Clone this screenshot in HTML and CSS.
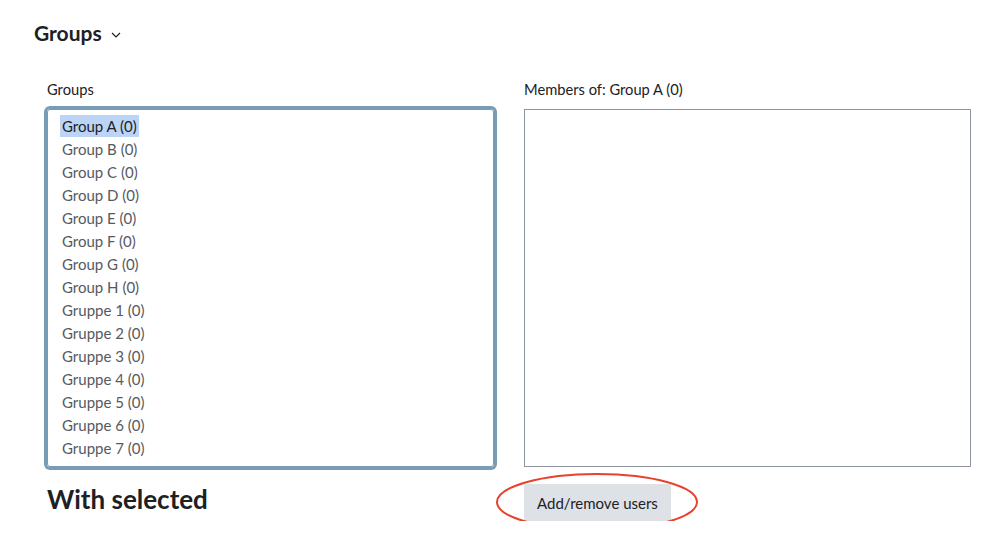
FILE: index.html
```html
<!DOCTYPE html>
<html lang="en">
<head>
    <meta charset="UTF-8">
    <meta name="viewport" content="width=device-width, initial-scale=1.0">
    <title>Groups</title>
    <link rel="stylesheet" href="styles.css">
</head>
<body>
    <div class="page">
        <h2 class="section-title">
            Groups
            <svg class="chevron" width="10" height="6" viewBox="0 0 10 6">
                <path d="M1 1 L5 5 L9 1" fill="none" stroke="#1d2125" stroke-width="1.2"/>
            </svg>
        </h2>

        <div class="columns">
            <div class="column">
                <label class="field-label">Groups</label>
                <div class="select-box focused">
                    <div class="option selected">Group A (0)</div>
                    <div class="option">Group B (0)</div>
                    <div class="option">Group C (0)</div>
                    <div class="option">Group D (0)</div>
                    <div class="option">Group E (0)</div>
                    <div class="option">Group F (0)</div>
                    <div class="option">Group G (0)</div>
                    <div class="option">Group H (0)</div>
                    <div class="option">Gruppe 1 (0)</div>
                    <div class="option">Gruppe 2 (0)</div>
                    <div class="option">Gruppe 3 (0)</div>
                    <div class="option">Gruppe 4 (0)</div>
                    <div class="option">Gruppe 5 (0)</div>
                    <div class="option">Gruppe 6 (0)</div>
                    <div class="option">Gruppe 7 (0)</div>
                </div>
                <h3 class="with-selected">With selected</h3>
            </div>

            <div class="column">
                <label class="field-label">Members of: Group A (0)</label>
                <div class="select-box"></div>
                <div class="actions">
                    <button class="button">Add/remove users</button>
                    <!-- red marker drawn round the button -->
                    <svg class="marker" width="206" height="62" viewBox="0 0 206 62">
                        <ellipse cx="103" cy="31" rx="100" ry="28" fill="none" stroke="#e8412c" stroke-width="2"/>
                    </svg>
                </div>
            </div>
        </div>
    </div>
</body>
</html>
```

FILE: styles.css
```css
body, html {
    margin: 0;
    padding: 0;
    background-color: #ffffff;
    color: #1d2125;
    font-family: Lato, "Open Sans", sans-serif;
}

.page {
    padding: 20px 0 0 34px;
}

.section-title {
    margin: 0;
    font-size: 21px;
    font-weight: bold;
    line-height: 26px;
    display: flex;
    align-items: center;
    gap: 9px;
}

.chevron {
    margin-top: 3px;
}

.columns {
    display: flex;
    gap: 30px;
    margin-top: 33px;
    padding-left: 13px;
}

.column {
    width: 447px;
    display: flex;
    flex-direction: column;
}

.field-label {
    font-size: 14.7px;
    line-height: 20px;
    margin-bottom: 10px;
}

.select-box {
    height: 358px;
    box-sizing: border-box;
    border: 1px solid #8f959e;
    padding: 5px 12px;
    font-size: 15px;
    color: #555a60;
}

.select-box.focused {
    border-color: #789cb6;
    box-shadow: 0 0 0 3px #789cb6;
    border-radius: 3px;
}

.option {
    line-height: 22px;
    margin-bottom: 1px;
    padding: 0 2px;
    width: fit-content;
}

.option.selected {
    background-color: #bcd5f7;
    color: #1d2125;
}

.with-selected {
    margin: 16px 0 0 0;
    font-size: 26px;
    font-weight: bold;
    line-height: 32px;
}

.actions {
    position: relative;
    margin-top: 17px;
}

.button {
    background-color: #dee2e6;
    color: #1d2125;
    border: none;
    font-family: inherit;
    font-size: 15px;
    height: 37px;
    padding: 0 13px;
    cursor: pointer;
}

.marker {
    position: absolute;
    left: -30px;
    top: -13px;
    pointer-events: none;
}
```
